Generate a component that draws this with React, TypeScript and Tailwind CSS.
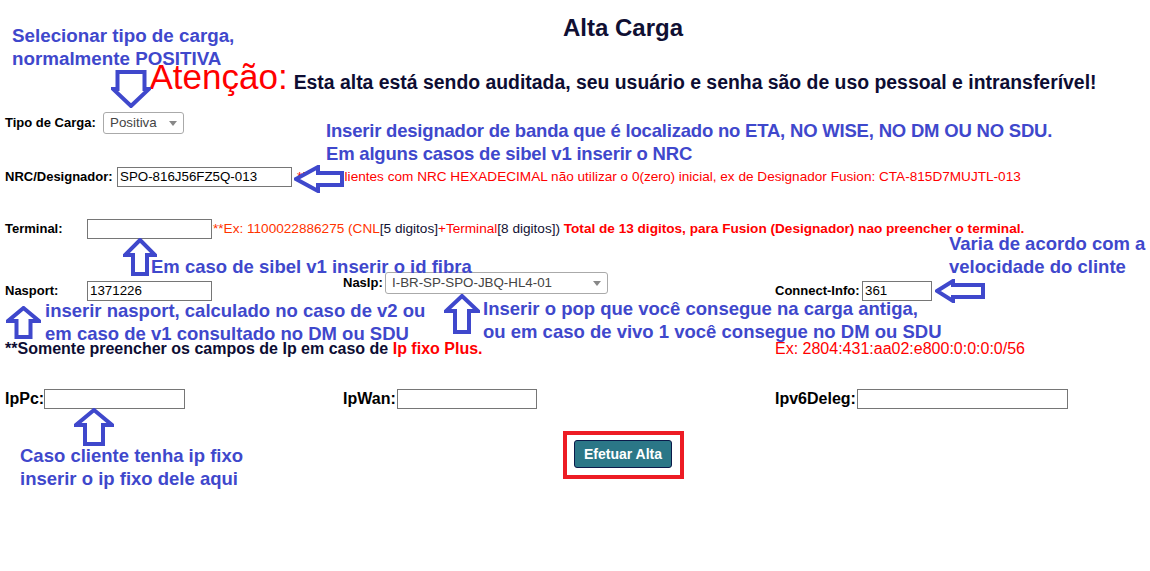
import React from "react"

const ink = "#3f48cc"

type Dir = "up" | "down" | "left"

// outline arrow, like the ones drawn by hand over the screenshot
function Arrow({ dir, w, h, head, shaft, className }: { dir: Dir; w: number; h: number; head: number; shaft: number; className: string }) {
  const p = 2
  let pts: number[][] = []
  if (dir === "up") {
    pts = [[w / 2, p], [w - p, head], [w / 2 + shaft / 2, head], [w / 2 + shaft / 2, h - p], [w / 2 - shaft / 2, h - p], [w / 2 - shaft / 2, head], [p, head]]
  } else if (dir === "down") {
    pts = [[w / 2, h - p], [w - p, h - head], [w / 2 + shaft / 2, h - head], [w / 2 + shaft / 2, p], [w / 2 - shaft / 2, p], [w / 2 - shaft / 2, h - head], [p, h - head]]
  } else {
    pts = [[p, h / 2], [head, p], [head, h / 2 - shaft / 2], [w - p, h / 2 - shaft / 2], [w - p, h / 2 + shaft / 2], [head, h / 2 + shaft / 2], [head, h - p]]
  }
  return (
    <svg width={w} height={h} viewBox={`0 0 ${w} ${h}`} className={className}>
      <polygon points={pts.map((q) => q.join(",")).join(" ")} fill="white" stroke={ink} strokeWidth={4} strokeLinejoin="miter" />
    </svg>
  )
}

function Note({ className, lines }: { className: string; lines: string[] }) {
  return (
    <div className={`absolute whitespace-nowrap text-[18.5px] font-bold leading-[23px] text-[#3f48cc] ${className}`}>
      {lines.map((l) => (
        <div key={l}>{l}</div>
      ))}
    </div>
  )
}

function FakeSelect({ value, className }: { value: string; className: string }) {
  return (
    <div className={`flex items-center justify-between rounded-[3px] border border-[#aaaaaa] bg-white pl-[6px] pr-[6px] text-[13.33px] text-[#444444] ${className}`}>
      <span>{value}</span>
      <span className="h-0 w-0 border-x-[4px] border-t-[5px] border-x-transparent border-t-[#888888]" />
    </div>
  )
}

const input = "h-[20px] border border-[#767676] bg-white px-[2px] text-[13.33px] leading-[18px] text-black"

export default function App() {
  return (
    <div className="relative h-[571px] w-[1150px] overflow-hidden bg-white font-['Liberation_Sans',Arial,sans-serif] text-black">
      <div className="w-[1246px]">
        <h1 className="mt-[14px] h-[28px] text-center text-[24px] font-bold leading-[28px] text-[#101033]">Alta Carga</h1>
        <div className="mt-[15px] flex h-[40px] items-baseline justify-center">
          <span className="text-[35px] leading-[40px] text-[#ff0000]">Atenção:</span>
          <span className="ml-[6px] text-[19.4px] font-bold text-[#0d0d33]">Esta alta está sendo auditada, seu usuário e senha são de uso pessoal e intransferível!</span>
        </div>
      </div>

      <div className="pl-[5px] text-[13px]">
        {/* Tipo de carga */}
        <div className="mt-[15px] flex h-[22px] items-center">
          <span className="w-[98px] font-bold">Tipo de Carga:</span>
          <FakeSelect value="Positiva" className="h-[22px] w-[81px]" />
        </div>

        {/* NRC */}
        <div className="mt-[33px] flex h-[20px] items-center">
          <span className="w-[112px] whitespace-nowrap font-bold">NRC/Designador:</span>
          <div className={`${input} w-[175px]`}>SPO-816J56FZ5Q-013</div>
          <span className="ml-[5px] whitespace-nowrap text-[13.6px] text-[#ff0000]">
            *Para Clientes com NRC HEXADECIMAL não utilizar o 0(zero) inicial, ex de Designador Fusion: CTA-815D7MUJTL-013
          </span>
        </div>

        {/* Terminal */}
        <div className="mt-[32px] flex h-[20px] items-center">
          <span className="w-[82px] font-bold">Terminal:</span>
          <div className={`${input} w-[125px]`} />
          <span className="ml-[1px] whitespace-nowrap text-[13.6px]">
            <span className="text-[#ff3300]">**Ex: 1100022886275 (CNL</span>
            <span className="text-[#111133]">[5 digitos]</span>
            <span className="text-[#ff0000]">+Terminal</span>
            <span className="text-[#111133]">[8 digitos])</span>
            <span className="font-bold text-[#ff0000]"> Total de 13 digitos, para Fusion (Designador) nao preencher o terminal.</span>
          </span>
        </div>

        {/* Nasport / NasIp / Connect-Info */}
        <div className="mt-[33px] flex h-[29px] items-start">
          <div className="mt-[9px] flex w-[338px] items-center">
            <span className="w-[82px] font-bold">Nasport:</span>
            <div className={`${input} w-[125px]`}>1371226</div>
          </div>
          <div className="flex w-[432px] items-center">
            <span className="w-[42px] font-bold">NasIp:</span>
            <FakeSelect value="I-BR-SP-SPO-JBQ-HL4-01" className="h-[22px] w-[223px]" />
          </div>
          <div className="mt-[9px] flex items-center">
            <span className="w-[87px] font-bold">Connect-Info:</span>
            <div className={`${input} w-[70px]`}>361</div>
          </div>
        </div>

        {/* aviso ip */}
        <div className="mt-[39px] flex h-[18px] items-center text-[16px]">
          <span className="w-[770px] whitespace-nowrap font-bold text-[#0d0d33]">
            **Somente preencher os campos de Ip em caso de <span className="text-[#ff0000]">Ip fixo Plus.</span>
          </span>
          <span className="text-[#ff0000]">Ex: 2804:431:aa02:e800:0:0:0:0/56</span>
        </div>

        {/* IPs */}
        <div className="mt-[31px] flex h-[20px] items-center text-[16px] font-bold">
          <div className="flex w-[338px] items-center">
            <span className="w-[39px]">IpPc:</span>
            <div className={`${input} w-[141px] font-normal`} />
          </div>
          <div className="flex w-[432px] items-center">
            <span className="w-[54px]">IpWan:</span>
            <div className={`${input} w-[140px] font-normal`} />
          </div>
          <div className="flex items-center">
            <span className="w-[82px]">Ipv6Deleg:</span>
            <div className={`${input} w-[211px] font-normal`} />
          </div>
        </div>

        <div className="mt-[31px] pl-[569px]">
          <button className="h-[28px] w-[98px] rounded-[3px] border border-[#0b1a4a] bg-[#2b7787] text-[14px] font-bold text-white">
            Efetuar Alta
          </button>
        </div>
      </div>

      {/* anotações */}
      <div className="absolute left-[563px] top-[431px] h-[48px] w-[121px] border-[4px] border-[#ed1c24]" />

      <Note className="left-[12px] top-[24px] text-[18.8px]" lines={["Selecionar tipo de carga,", "normalmente POSITIVA"]} />
      <Note
        className="left-[326px] top-[119px] tracking-[-0.2px]"
        lines={["Inserir designador de banda que é localizado no ETA, NO WISE, NO DM OU NO SDU.", "Em alguns casos de sibel v1 inserir o NRC"]}
      />
      <Note className="left-[151px] top-[255px]" lines={["Em caso de sibel v1 inserir o id fibra"]} />
      <Note className="left-[949px] top-[232px]" lines={["Varia de acordo com a", "velocidade do clinte"]} />
      <Note className="left-[45px] top-[299px]" lines={["inserir nasport, calculado no caso de v2 ou", "em caso de v1 consultado no DM ou SDU"]} />
      <Note className="left-[483px] top-[297px]" lines={["Inserir o pop que você consegue na carga antiga,", "ou em caso de vivo 1 você consegue no DM ou SDU"]} />
      <Note className="left-[20px] top-[444px]" lines={["Caso cliente tenha ip fixo", "inserir o ip fixo dele aqui"]} />

      <Arrow dir="down" w={40} h={38} head={19} shaft={27} className="absolute left-[111px] top-[70px]" />
      <Arrow dir="left" w={50} h={28} head={24} shaft={12} className="absolute left-[294px] top-[165px]" />
      <Arrow dir="up" w={34} h={38} head={17} shaft={14} className="absolute left-[123px] top-[238px]" />
      <Arrow dir="left" w={50} h={24} head={18} shaft={12} className="absolute left-[935px] top-[279px]" />
      <Arrow dir="up" w={35} h={33} head={15} shaft={14} className="absolute left-[6px] top-[306px]" />
      <Arrow dir="up" w={36} h={40} head={17} shaft={14} className="absolute left-[444px] top-[294px]" />
      <Arrow dir="up" w={40} h={38} head={17} shaft={18} className="absolute left-[74px] top-[408px]" />
    </div>
  )
}
